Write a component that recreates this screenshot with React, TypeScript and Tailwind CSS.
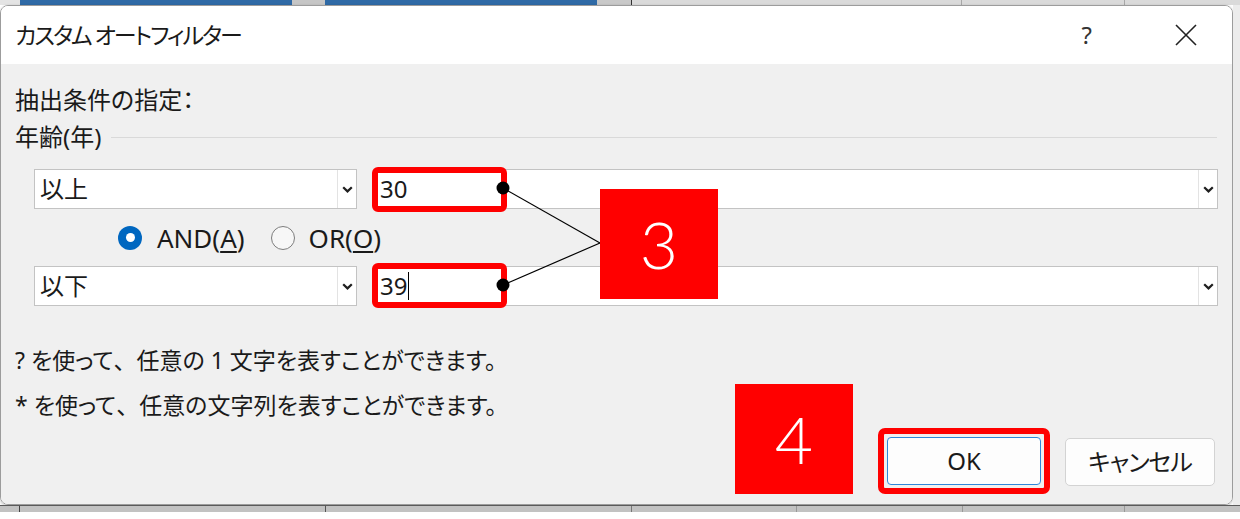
import React from "react";

function Chevron() {
  return (
    <svg width="11" height="7" viewBox="0 0 11 7" className="block">
      <path d="M1.2 1.2 L5.5 5.4 L9.8 1.2" fill="none" stroke="#1f1f1f" strokeWidth="2.2" />
    </svg>
  );
}

function Combo({ text, className, children }: { text?: string; className?: string; children?: React.ReactNode }) {
  return (
    <div className={`h-[40px] flex border border-[#c3c3c3] bg-white ${className ?? ""}`}>
      <div className="flex-1 flex items-center pl-[5px] text-[24px] leading-none text-[#1a1a1a]">
        {text}
        {children}
      </div>
      <div className="w-[19px] border-l border-[#e3e3e3] flex items-center justify-center">
        <Chevron />
      </div>
    </div>
  );
}

function SheetTop() {
  return (
    <div className="h-[5px] flex shrink-0">
      <div className="w-[20px] bg-[#e4e4e4]" />
      <div className="w-[272px] bg-[#2f6aa6]" />
      <div className="w-[33px] bg-[#c6c6c6]" />
      <div className="w-[272px] bg-[#2f6aa6]" />
      <div className="w-[35px] bg-[#c9c9c9] border-r border-[#333]" />
      <div className="w-[330px] bg-[#dadada] border-r border-[#a8a8a8]" />
      <div className="w-[163px] bg-[#dadada] border-r border-[#a8a8a8]" />
      <div className="flex-1 bg-[#dadada]" />
    </div>
  );
}

function SheetBottom() {
  return (
    <div className="h-[14px] flex flex-col shrink-0">
      <div className="h-[7px] flex bg-[#c2c2c2] border-t border-[#5a5a5a]">
        <div className="w-[20px] border-r border-[#444]" />
        <div className="w-[306px] border-r border-[#555]" />
        <div className="w-[306px] border-r border-[#777]" />
        <div className="w-[165px] border-r border-[#999]" />
        <div className="w-[166px] border-r border-[#999]" />
        <div className="w-[162px] border-r border-[#999]" />
        <div className="flex-1" />
      </div>
      <div className="flex-1 bg-white" />
    </div>
  );
}

export default function App() {
  const comma = <span className="[font-feature-settings:normal]">、</span>;
  return (
    <div className="w-[1240px] h-[519px] overflow-hidden bg-white flex flex-col text-[#1a1a1a] font-['Noto_Sans','Noto_Sans_CJK_JP',sans-serif] [font-feature-settings:'palt']">
      <SheetTop />
      <div className="h-[500px] flex">
        <div className="w-[1233px] flex flex-col border border-[#9c9c9c] rounded-[8px] overflow-hidden shadow-[0_1px_3px_rgba(0,0,0,0.25)]">
          {/* title bar */}
          <div className="h-[58px] shrink-0 bg-white flex items-center pl-[14px] pr-[34px]">
            <span className="text-[23px] leading-none tracking-[-2px]">カスタム オートフィルター</span>
            <span className="ml-auto text-[24px] leading-none text-[#333] mr-[82px]">?</span>
            <svg width="24" height="24" viewBox="0 0 24 24" className="block">
              <path d="M2 2 L22 22 M22 2 L2 22" stroke="#222" strokeWidth="1.6" />
            </svg>
          </div>

          {/* body */}
          <div className="relative flex-1 flex flex-col bg-[#f0f0f0] pl-[14px] pr-[14px] pb-[10px]">
            <div className="mt-[21px] h-[30px] text-[24px] leading-[30px]">抽出条件の指定：</div>
            <div className="mt-[7px] h-[30px] flex items-center">
              <span className="text-[24px] leading-[30px]">年齢(年)</span>
              <div className="flex-1 h-px bg-[#d9d9d9] ml-[10px] mr-[1px]" />
            </div>

            <div className="mt-[17px] ml-[19px] flex gap-[17px]">
              <Combo text="以上" className="w-[323px]" />
              <Combo text="30" className="flex-1" />
            </div>

            <div className="h-[57px] ml-[103px] flex items-center text-[26px] leading-none">
              <div className="w-[24px] h-[24px] rounded-full bg-[#0067c0] flex items-center justify-center">
                <div className="w-[9px] h-[9px] rounded-full bg-white" />
              </div>
              <span className="ml-[15px]">
                AND(<span className="underline underline-offset-[3px]">A</span>)
              </span>
              <div className="ml-[26px] w-[24px] h-[24px] rounded-full border-[1.5px] border-[#7d7d7d] bg-[#f7f7f7]" />
              <span className="ml-[14px]">
                OR(<span className="underline underline-offset-[3px]">O</span>)
              </span>
            </div>

            <div className="ml-[19px] flex gap-[17px]">
              <Combo text="以下" className="w-[323px]" />
              <Combo className="flex-1">
                39<span className="ml-[1px] w-px h-[28px] bg-black" />
              </Combo>
            </div>

            <div className="mt-[32px] flex-1 flex">
              <div className="flex flex-col text-[23px] leading-[45px]">
                <div>? を使って{comma}任意の 1 文字を表すことができます。</div>
                <div>* を使って{comma}任意の文字列を表すことができます。</div>
              </div>
              <div className="ml-auto self-end flex items-end mr-[3px]">
                <div className="w-[118px] h-[110px] bg-[#ff0000] flex items-center justify-center text-white text-[66px] font-light leading-none font-['Lato',sans-serif]">
                  4
                </div>
                <div className="ml-[25px] w-[172px] h-[66px] border-[6px] border-[#ff0000] rounded-[7px] p-[3px]">
                  <div className="w-full h-full rounded-[4px] border-[1.5px] border-[#2f86d9] bg-[#fdfdfd] flex items-center justify-center text-[24px] leading-none">
                    OK
                  </div>
                </div>
                <div className="ml-[15px] mb-[8px] w-[150px] h-[48px] rounded-[5px] border border-[#d3d3d3] bg-[#fdfdfd] flex items-center justify-center text-[24px] leading-none tracking-[-1px]">
                  キャンセル
                </div>
              </div>
            </div>

            {/* annotations */}
            <div className="absolute left-[371px] top-[103px] w-[135px] h-[45px] border-[6px] border-[#ff0000] rounded-[6px]" />
            <div className="absolute left-[371px] top-[199px] w-[135px] h-[45px] border-[6px] border-[#ff0000] rounded-[6px]" />
            <svg className="absolute left-0 top-0 pointer-events-none" width="1231" height="440">
              <line x1="502" y1="124" x2="599" y2="179" stroke="#000" strokeWidth="1.2" />
              <line x1="502" y1="221" x2="599" y2="179" stroke="#000" strokeWidth="1.2" />
              <circle cx="502" cy="124" r="6.5" fill="#000" />
              <circle cx="502" cy="221" r="6.5" fill="#000" />
            </svg>
            <div className="absolute left-[599px] top-[125px] w-[118px] h-[110px] bg-[#ff0000] flex items-center justify-center text-white text-[66px] font-light leading-none font-['Lato',sans-serif]">
              3
            </div>
          </div>
        </div>
        <div className="flex-1 bg-[#ececec]" />
      </div>
      <SheetBottom />
    </div>
  );
}
